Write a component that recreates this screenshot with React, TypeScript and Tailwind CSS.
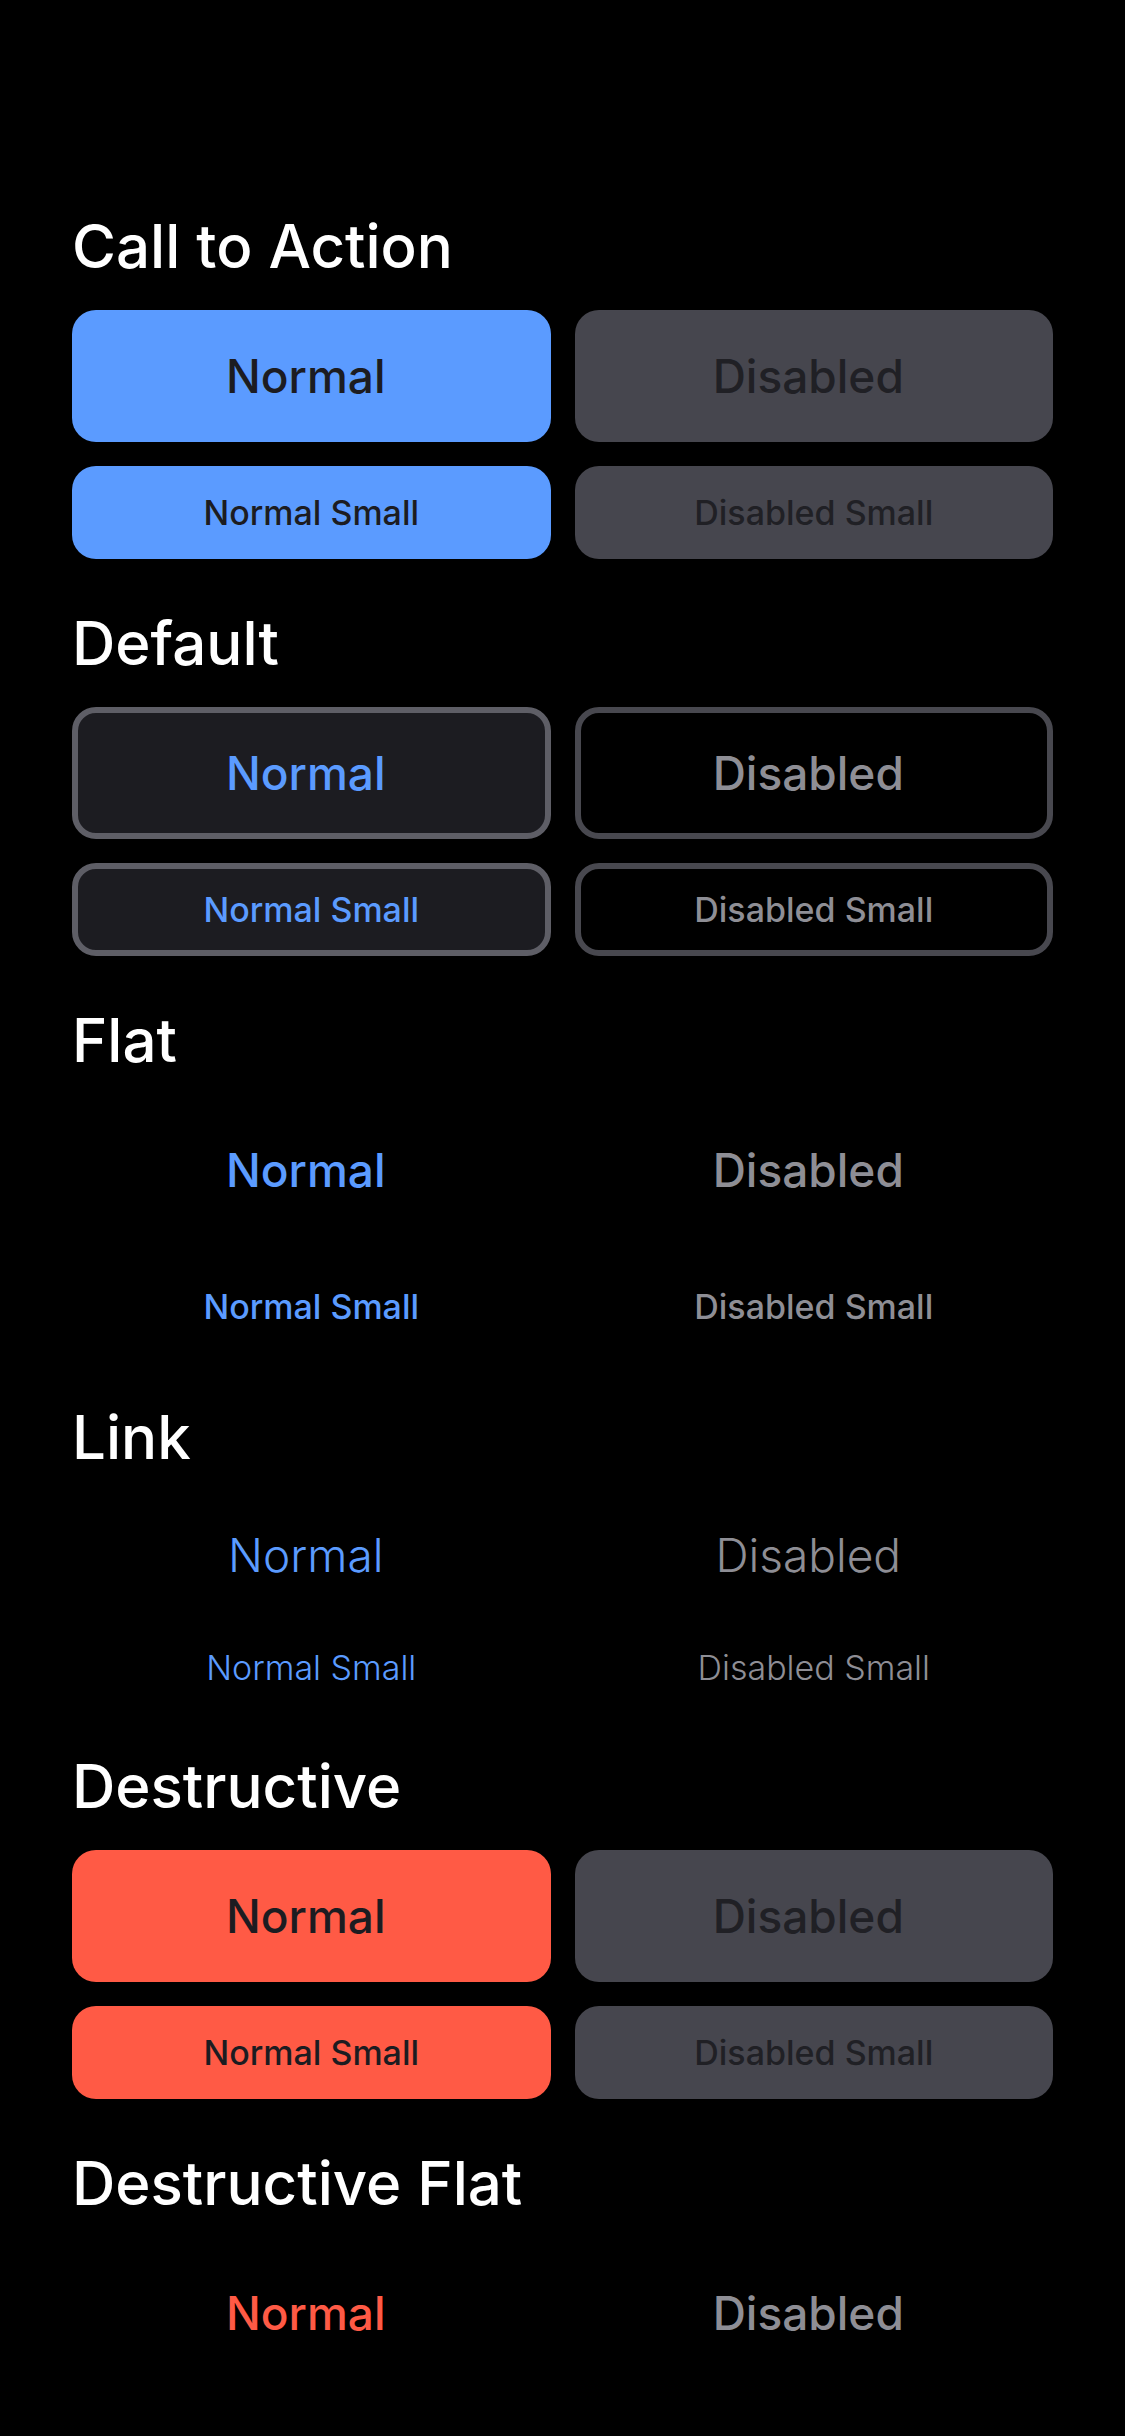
import React from 'react'

type Variant = 'cta' | 'default' | 'flat' | 'link' | 'destructive' | 'destructiveFlat'

const styles: Record<Variant, { normal: string; disabled: string; big: string; small: string }> = {
  cta: {
    normal: 'bg-[#5b9bff] text-[#1c1c21] font-medium',
    disabled: 'bg-[#46464e] text-[#202025] font-medium',
    big: 'h-[132px]',
    small: 'h-[93px]',
  },
  default: {
    normal: 'bg-[#1c1c21] border-[6px] border-[#5e5e66] text-[#5b9bff] font-medium',
    disabled: 'bg-black border-[6px] border-[#48484f] text-[#8e8e95] font-medium',
    big: 'h-[132px]',
    small: 'h-[93px]',
  },
  flat: {
    normal: 'text-[#5b9bff] font-medium',
    disabled: 'text-[#8e8e95] font-medium',
    big: 'h-[132px]',
    small: 'h-[93px]',
  },
  link: {
    normal: 'text-[#5b9bff] font-light',
    disabled: 'text-[#8e8e95] font-light',
    big: 'h-[108px]',
    small: 'h-[69px]',
  },
  destructive: {
    normal: 'bg-[#ff5a45] text-[#1c1c21] font-medium',
    disabled: 'bg-[#46464e] text-[#202025] font-medium',
    big: 'h-[132px]',
    small: 'h-[93px]',
  },
  destructiveFlat: {
    normal: 'text-[#ff5a45] font-medium',
    disabled: 'text-[#8e8e95] font-medium',
    big: 'h-[132px]',
    small: 'h-[93px]',
  },
}

const sections: { title: string; variant: Variant; small: boolean }[] = [
  { title: 'Call to Action', variant: 'cta', small: true },
  { title: 'Default', variant: 'default', small: true },
  { title: 'Flat', variant: 'flat', small: true },
  { title: 'Link', variant: 'link', small: true },
  { title: 'Destructive', variant: 'destructive', small: true },
  { title: 'Destructive Flat', variant: 'destructiveFlat', small: false },
]

const Btn = ({ label, cls, size, small }: { label: string; cls: string; size: string; small?: boolean }) => (
  <div
    className={`flex items-center justify-center rounded-[24px] ${size} ${cls} ${
      small ? 'text-[34px]' : 'text-[46px] pr-[11px]'
    }`}
  >
    {label}
  </div>
)

const App = () => {
  return (
    <div className="min-h-screen w-full bg-black px-[72px] pt-[210px] pb-[60px] font-['Inter','Liberation_Sans',sans-serif]">
      <div className="flex flex-col gap-[48px]">
        {sections.map((s) => {
          const st = styles[s.variant]
          return (
            <div key={s.title} className="flex flex-col">
              {/* Section title */}
              <div className="text-white text-[60px] leading-[72px] font-medium mb-[28px]">{s.title}</div>
              <div className="grid grid-cols-2 gap-[24px]">
                <Btn label="Normal" cls={st.normal} size={st.big} />
                <Btn label="Disabled" cls={st.disabled} size={st.big} />
                {s.small && (
                  <>
                    <Btn label="Normal Small" cls={st.normal} size={st.small} small />
                    <Btn label="Disabled Small" cls={st.disabled} size={st.small} small />
                  </>
                )}
              </div>
            </div>
          )
        })}
      </div>
    </div>
  )
}

export default App
